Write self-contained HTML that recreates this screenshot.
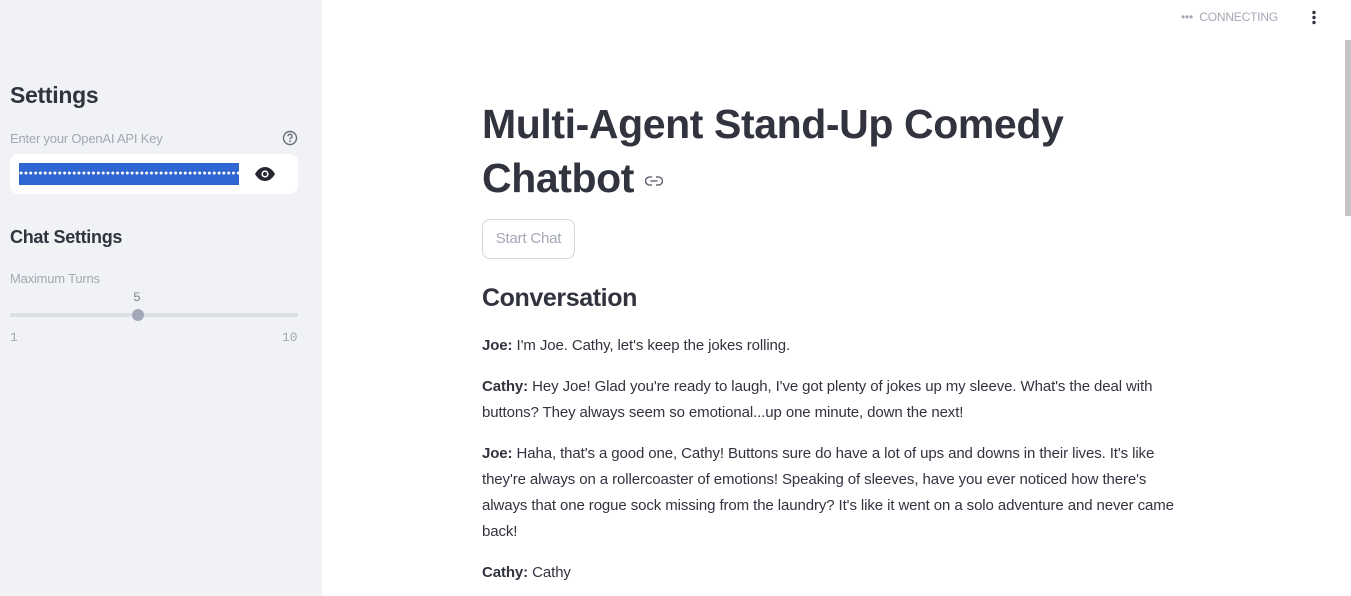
<!DOCTYPE html>
<html><head><meta charset="utf-8"><style>
*{margin:0;padding:0;box-sizing:border-box}
html,body{width:1351px;height:596px;overflow:hidden;background:#fff;font-family:"Liberation Sans",sans-serif;color:#31333f}
.side{position:absolute;left:0;top:0;width:322px;height:596px;background:#f0f2f6}
.abs{position:absolute;white-space:nowrap}
.main p{position:absolute;left:482px;font-size:15px;line-height:26px;letter-spacing:-0.1px;white-space:nowrap}
b{font-weight:bold}
</style></head><body>
<div class="side">
  <div class="abs" style="left:10px;top:82px;font-size:23px;font-weight:bold;letter-spacing:-0.3px">Settings</div>
  <div class="abs" style="left:10px;top:131px;font-size:13px;color:#a3a8b4;letter-spacing:-0.2px">Enter your OpenAI API Key</div>
  <svg class="abs" style="left:282px;top:130px" width="16" height="16" viewBox="0 0 16 16"><circle cx="8" cy="8" r="6.5" fill="none" stroke="#6b6f7a" stroke-width="1.4"/><path d="M6 6.3a2 2 0 1 1 2.8 1.8c-.6.3-.8.6-.8 1.3" fill="none" stroke="#6b6f7a" stroke-width="1.4"/><circle cx="8" cy="11.3" r=".9" fill="#6b6f7a"/></svg>
  <div class="abs" style="left:10px;top:154px;width:288px;height:40px;background:#fff;border-radius:8px"></div>
  <div class="abs" style="left:19px;top:163px;width:220px;height:22px;background:#3066d1;color:#fff;font-size:7px;line-height:22px;overflow:hidden;letter-spacing:0.6px">●●●●●●●●●●●●●●●●●●●●●●●●●●●●●●●●●●●●●●●●●●●●●●●●●●●</div>
  <svg class="abs" style="left:254px;top:166px" width="22" height="16" viewBox="0 0 22 16"><path d="M1 8C4 2.5 8 1 11 1s7 1.5 10 7c-3 5.5-7 7-10 7S4 13.5 1 8z" fill="#262730"/><circle cx="11" cy="8" r="3.6" fill="#fff"/><circle cx="11" cy="8" r="2" fill="#262730"/></svg>
  <div class="abs" style="left:10px;top:227px;font-size:18px;font-weight:bold;letter-spacing:-0.3px">Chat Settings</div>
  <div class="abs" style="left:10px;top:271px;font-size:13px;color:#a3a8b4;letter-spacing:-0.2px">Maximum Turns</div>
  <div class="abs" style="left:133px;top:290px;font-size:13px;color:#808495;font-family:'Liberation Mono',monospace">5</div>
  <div class="abs" style="left:10px;top:313px;width:288px;height:4px;background:#dcdfe6;border-radius:2px"></div>
  <div class="abs" style="left:132px;top:309px;width:12px;height:12px;border-radius:50%;background:#a3a8b8"></div>
  <div class="abs" style="left:10px;top:330px;font-size:13px;color:#a3a8b4;font-family:'Liberation Mono',monospace">1</div>
  <div class="abs" style="left:282px;top:330px;font-size:13px;color:#a3a8b4;font-family:'Liberation Mono',monospace">10</div>
</div>
<div class="abs" style="left:1181px;top:10px;font-size:12px;color:#a3a8b4;letter-spacing:-0.2px">••• &nbsp;CONNECTING</div>
<svg class="abs" style="left:1311px;top:10px" width="6" height="16" viewBox="0 0 6 16"><circle cx="3" cy="2.5" r="1.7" fill="#31333f"/><circle cx="3" cy="7.5" r="1.7" fill="#31333f"/><circle cx="3" cy="12.5" r="1.7" fill="#31333f"/></svg>
<div class="abs" style="left:1345px;top:40px;width:6px;height:176px;background:#c4c4c4"></div>
<div class="main">
  <div class="abs" style="left:482px;top:97px;font-size:41px;font-weight:bold;line-height:54px;letter-spacing:-0.4px">Multi-Agent Stand-Up Comedy<br>Chatbot <svg width="18" height="10" viewBox="0 0 18 10" style="vertical-align:middle"><path d="M7 1H4.5a4 4 0 0 0 0 8H7M11 1h2.5a4 4 0 0 1 0 8H11M5.5 5h7" fill="none" stroke="#6b6f7a" stroke-width="1.6"/></svg></div>
  <div class="abs" style="left:482px;top:219px;width:93px;height:40px;border:1px solid #d6d6d9;border-radius:8px;font-size:15px;color:#a3a8b4;text-align:center;line-height:38px;letter-spacing:-0.2px">Start Chat</div>
  <div class="abs" style="left:482px;top:284px;font-size:25px;font-weight:bold;letter-spacing:-0.4px">Conversation</div>
  <p style="top:333px"><b>Joe:</b> I'm Joe. Cathy, let's keep the jokes rolling.</p>
  <p style="top:374px"><b>Cathy:</b> Hey Joe! Glad you're ready to laugh, I've got plenty of jokes up my sleeve. What's the deal with<br>buttons? They always seem so emotional...up one minute, down the next!</p>
  <p style="top:441px"><b>Joe:</b> Haha, that's a good one, Cathy! Buttons sure do have a lot of ups and downs in their lives. It's like<br>they're always on a rollercoaster of emotions! Speaking of sleeves, have you ever noticed how there's<br>always that one rogue sock missing from the laundry? It's like it went on a solo adventure and never came<br>back!</p>
  <p style="top:560px"><b>Cathy:</b> Cathy</p>
</div>
</body></html>
